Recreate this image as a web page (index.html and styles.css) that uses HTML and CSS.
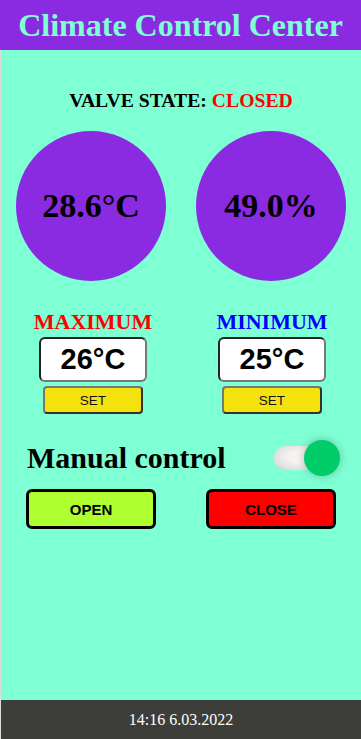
FILE: index.html
```html
<!DOCTYPE html>
<html lang="en">
<head>
<meta charset="utf-8">
<title>Climate Control Center</title>
<link rel="stylesheet" href="styles.css">
</head>
<body>
<header class="top">
  <h1 class="title">Climate Control Center</h1>
</header>
<main class="main">
  <p class="valve">VALVE STATE: <span class="valve-closed">CLOSED</span></p>
  <div class="gauges">
    <div class="gauge-cell"><div class="gauge">28.6°C</div></div>
    <div class="gauge-cell"><div class="gauge">49.0%</div></div>
  </div>
  <div class="limits">
    <div class="limit">
      <div class="limit-label max">MAXIMUM</div>
      <div class="limit-value">26°C</div>
      <button class="set-btn" type="button">SET</button>
    </div>
    <div class="limit">
      <div class="limit-label min">MINIMUM</div>
      <div class="limit-value">25°C</div>
      <button class="set-btn" type="button">SET</button>
    </div>
  </div>
  <div class="manual">
    <span class="manual-label">Manual control</span>
    <div class="toggle">
      <div class="toggle-track"></div>
      <div class="toggle-thumb"></div>
    </div>
  </div>
  <div class="actions">
    <button class="act-btn open" type="button">OPEN</button>
    <button class="act-btn close" type="button">CLOSE</button>
  </div>
</main>
<footer class="foot">14:16 6.03.2022</footer>
</body>
</html>
```
FILE: styles.css
```css
html, body {
  margin: 0;
  padding: 0;
}
body {
  background: #dcdcdc;
  height: 100vh;
  display: flex;
  flex-direction: column;
  overflow: hidden;
  font-family: "Liberation Serif", "Times New Roman", serif;
}
.top {
  background: #8a2be2;
  height: 50px;
  flex: none;
}
.title {
  margin: 0;
  color: #7fffd4;
  font-size: 32px;
  font-weight: bold;
  line-height: 50px;
  text-align: center;
}
.main {
  flex: 1;
  margin-left: 1px;
  background: #7fffd4;
  display: flex;
  flex-direction: column;
}
.valve {
  margin: 39px 0 0;
  font-size: 19.7px;
  line-height: 22px;
  font-weight: bold;
  text-align: center;
  color: #000;
}
.valve-closed {
  color: #ff0000;
}
.gauges {
  margin-top: 20px;
  display: grid;
  grid-template-columns: 1fr 1fr;
}
.gauge-cell {
  display: flex;
  justify-content: center;
}
.gauge {
  width: 150px;
  height: 150px;
  border-radius: 50%;
  background: #8a2be2;
  display: flex;
  align-items: center;
  justify-content: center;
  font-size: 34px;
  font-weight: bold;
  color: #000;
}
.limits {
  margin-top: 28px;
  padding-left: 2px;
  display: grid;
  grid-template-columns: 180px 178px;
}
.limit {
  display: flex;
  flex-direction: column;
  align-items: center;
}
.limit-label {
  font-size: 22px;
  font-weight: bold;
  line-height: 26px;
}
.limit-label.max { color: #ff0000; }
.limit-label.min { color: #0000ff; }
.limit-value {
  margin-top: 2px;
  box-sizing: border-box;
  width: 108px;
  height: 45px;
  background: #fff;
  border: 2px solid;
  border-color: #222 #777 #777 #222;
  border-radius: 6px;
  display: flex;
  align-items: center;
  justify-content: center;
  font-family: "Liberation Sans", Arial, sans-serif;
  font-weight: bold;
  font-size: 29px;
  color: #000;
}
.set-btn {
  margin-top: 4px;
  box-sizing: border-box;
  width: 100px;
  height: 28px;
  background: #f4e20f;
  border: 2px solid;
  border-color: #777 #333 #333 #777;
  border-radius: 4px;
  font-family: "Liberation Sans", Arial, sans-serif;
  font-size: 13.5px;
  color: #111;
  padding: 0;
}
.manual {
  margin-top: 26px;
  height: 36px;
  padding-left: 26px;
  display: flex;
  align-items: center;
  gap: 48px;
}
.manual-label {
  font-size: 30px;
  font-weight: bold;
  color: #000;
}
.toggle {
  position: relative;
  width: 66px;
  height: 36px;
}
.toggle-track {
  position: absolute;
  left: 0;
  top: 6px;
  width: 48px;
  height: 24px;
  border-radius: 12px;
  background: radial-gradient(ellipse at 55% 45%, #f6f4f2 30%, #e2e0de 70%, #c9c9c9 100%);
}
.toggle-thumb {
  position: absolute;
  right: 0;
  top: 0;
  width: 36px;
  height: 36px;
  border-radius: 50%;
  background: #00cc6a;
  box-shadow: 0 0 8px rgba(0, 0, 0, 0.25);
}
.actions {
  margin-top: 13px;
  padding-left: 25px;
  display: flex;
  gap: 50px;
}
.act-btn {
  box-sizing: border-box;
  width: 130px;
  height: 40px;
  border: 3px solid #000;
  border-radius: 6px;
  font-family: "Liberation Sans", Arial, sans-serif;
  font-weight: bold;
  font-size: 15px;
  color: #000;
  padding: 0;
}
.act-btn.open { background: #adff2f; }
.act-btn.close { background: #ff0000; }
.foot {
  flex: none;
  margin-left: 1px;
  height: 39px;
  line-height: 39px;
  background: #3d3e3a;
  color: #fff;
  font-size: 16px;
  text-align: center;
}
```
